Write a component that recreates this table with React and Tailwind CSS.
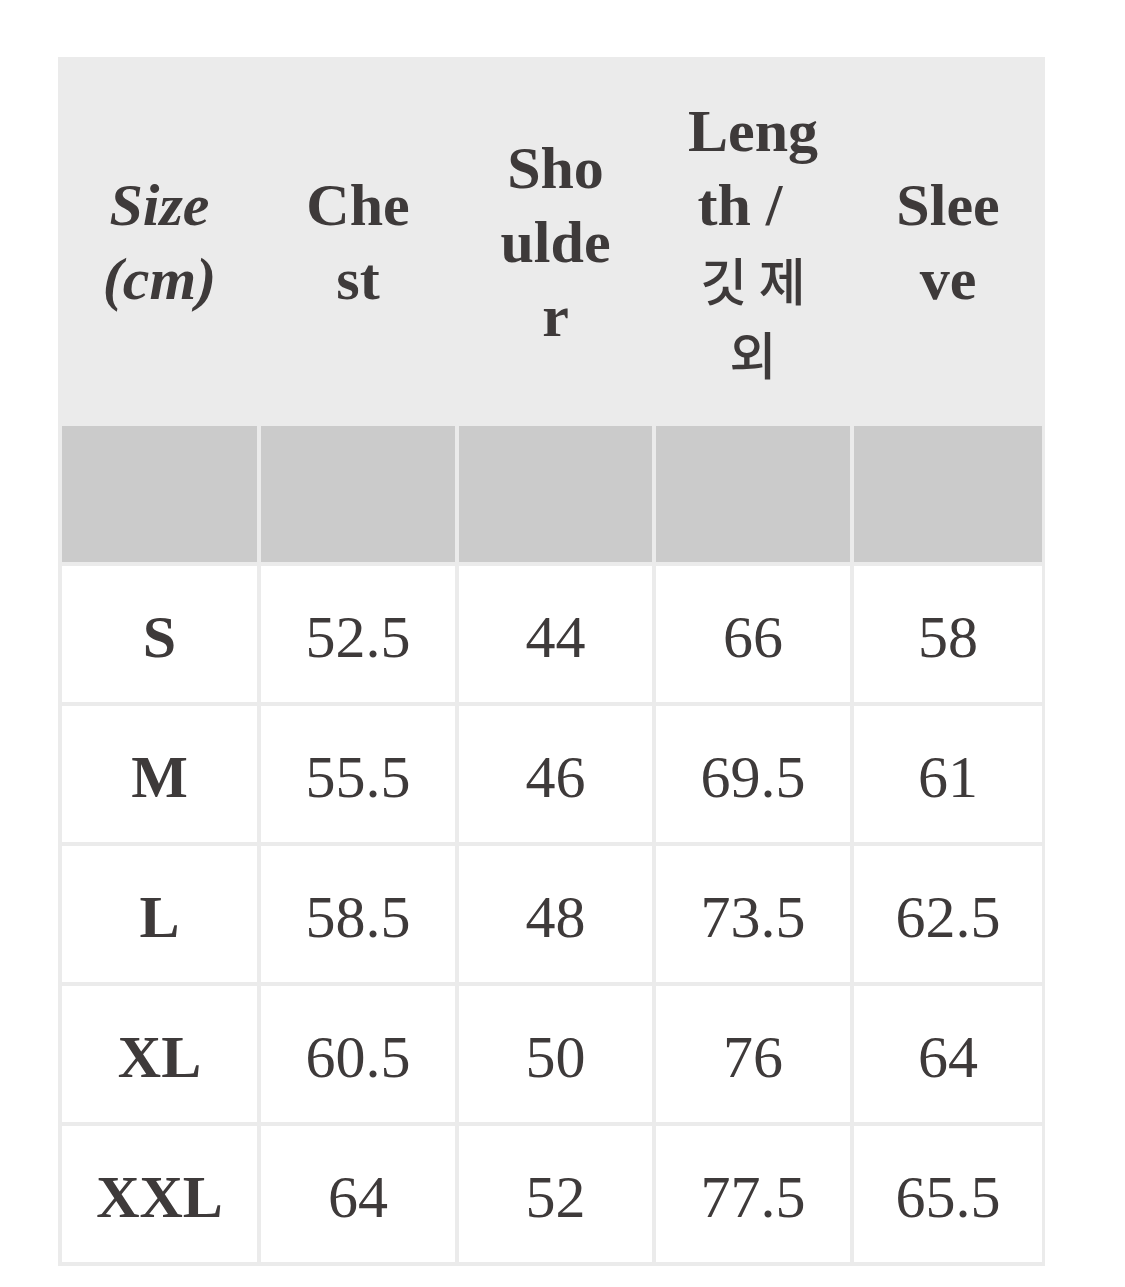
import React from "react";

const headers = [
  { lines: ["Size", "(cm)"], italic: true },
  { lines: ["Che", "st"] },
  { lines: ["Sho", "ulde", "r"] },
  { lines: ["Leng", "th /", "깃 제", "외"], ko: [2, 3], shift: [1] },
  { lines: ["Slee", "ve"] },
];

const rows = [
  ["S", "52.5", "44", "66", "58"],
  ["M", "55.5", "46", "69.5", "61"],
  ["L", "58.5", "48", "73.5", "62.5"],
  ["XL", "60.5", "50", "76", "64"],
  ["XXL", "64", "52", "77.5", "65.5"],
];

export default function App() {
  return (
    <div
      className="min-h-[1287px] w-[1125px] bg-white pt-[57px] pl-[58px] text-[#3e3a3a]"
      style={{ fontFamily: '"Liberation Serif", "Noto Sans CJK KR", serif' }}
    >
      <div className="grid w-[987px] grid-cols-[195px_194px_193px_194px_188px] gap-[4px] bg-[#ebebeb] pt-[4px] pr-[3px] pb-[4px] pl-[4px]">
        {/* header */}
        {headers.map((h, i) => (
          <div
            key={i}
            className={`flex h-[361px] flex-col items-center justify-center text-center text-[60px] font-bold leading-[74px] ${
              h.italic ? "italic" : ""
            }`}
          >
            {h.lines.map((line, j) => {
              if (h.ko && h.ko.includes(j)) {
                return (
                  <span
                    key={j}
                    className="text-[51px] font-medium leading-[74px]"
                    style={{ fontFamily: '"Noto Sans CJK KR", sans-serif' }}
                  >
                    {line}
                  </span>
                );
              }
              return (
                <span key={j} className={h.shift && h.shift.includes(j) ? "pr-[26px]" : ""}>
                  {line}
                </span>
              );
            })}
          </div>
        ))}

        {/* empty gray row */}
        {headers.map((_, i) => (
          <div key={i} className="h-[136px] bg-[#cbcbcb]" />
        ))}

        {/* data */}
        {rows.map((row) =>
          row.map((cell, j) => (
            <div
              key={row[0] + j}
              className={`flex h-[136px] items-center justify-center bg-white pt-[6px] text-[60px] leading-none ${
                j === 0 ? "font-bold" : "font-normal"
              }`}
            >
              {cell}
            </div>
          ))
        )}
      </div>
    </div>
  );
}
